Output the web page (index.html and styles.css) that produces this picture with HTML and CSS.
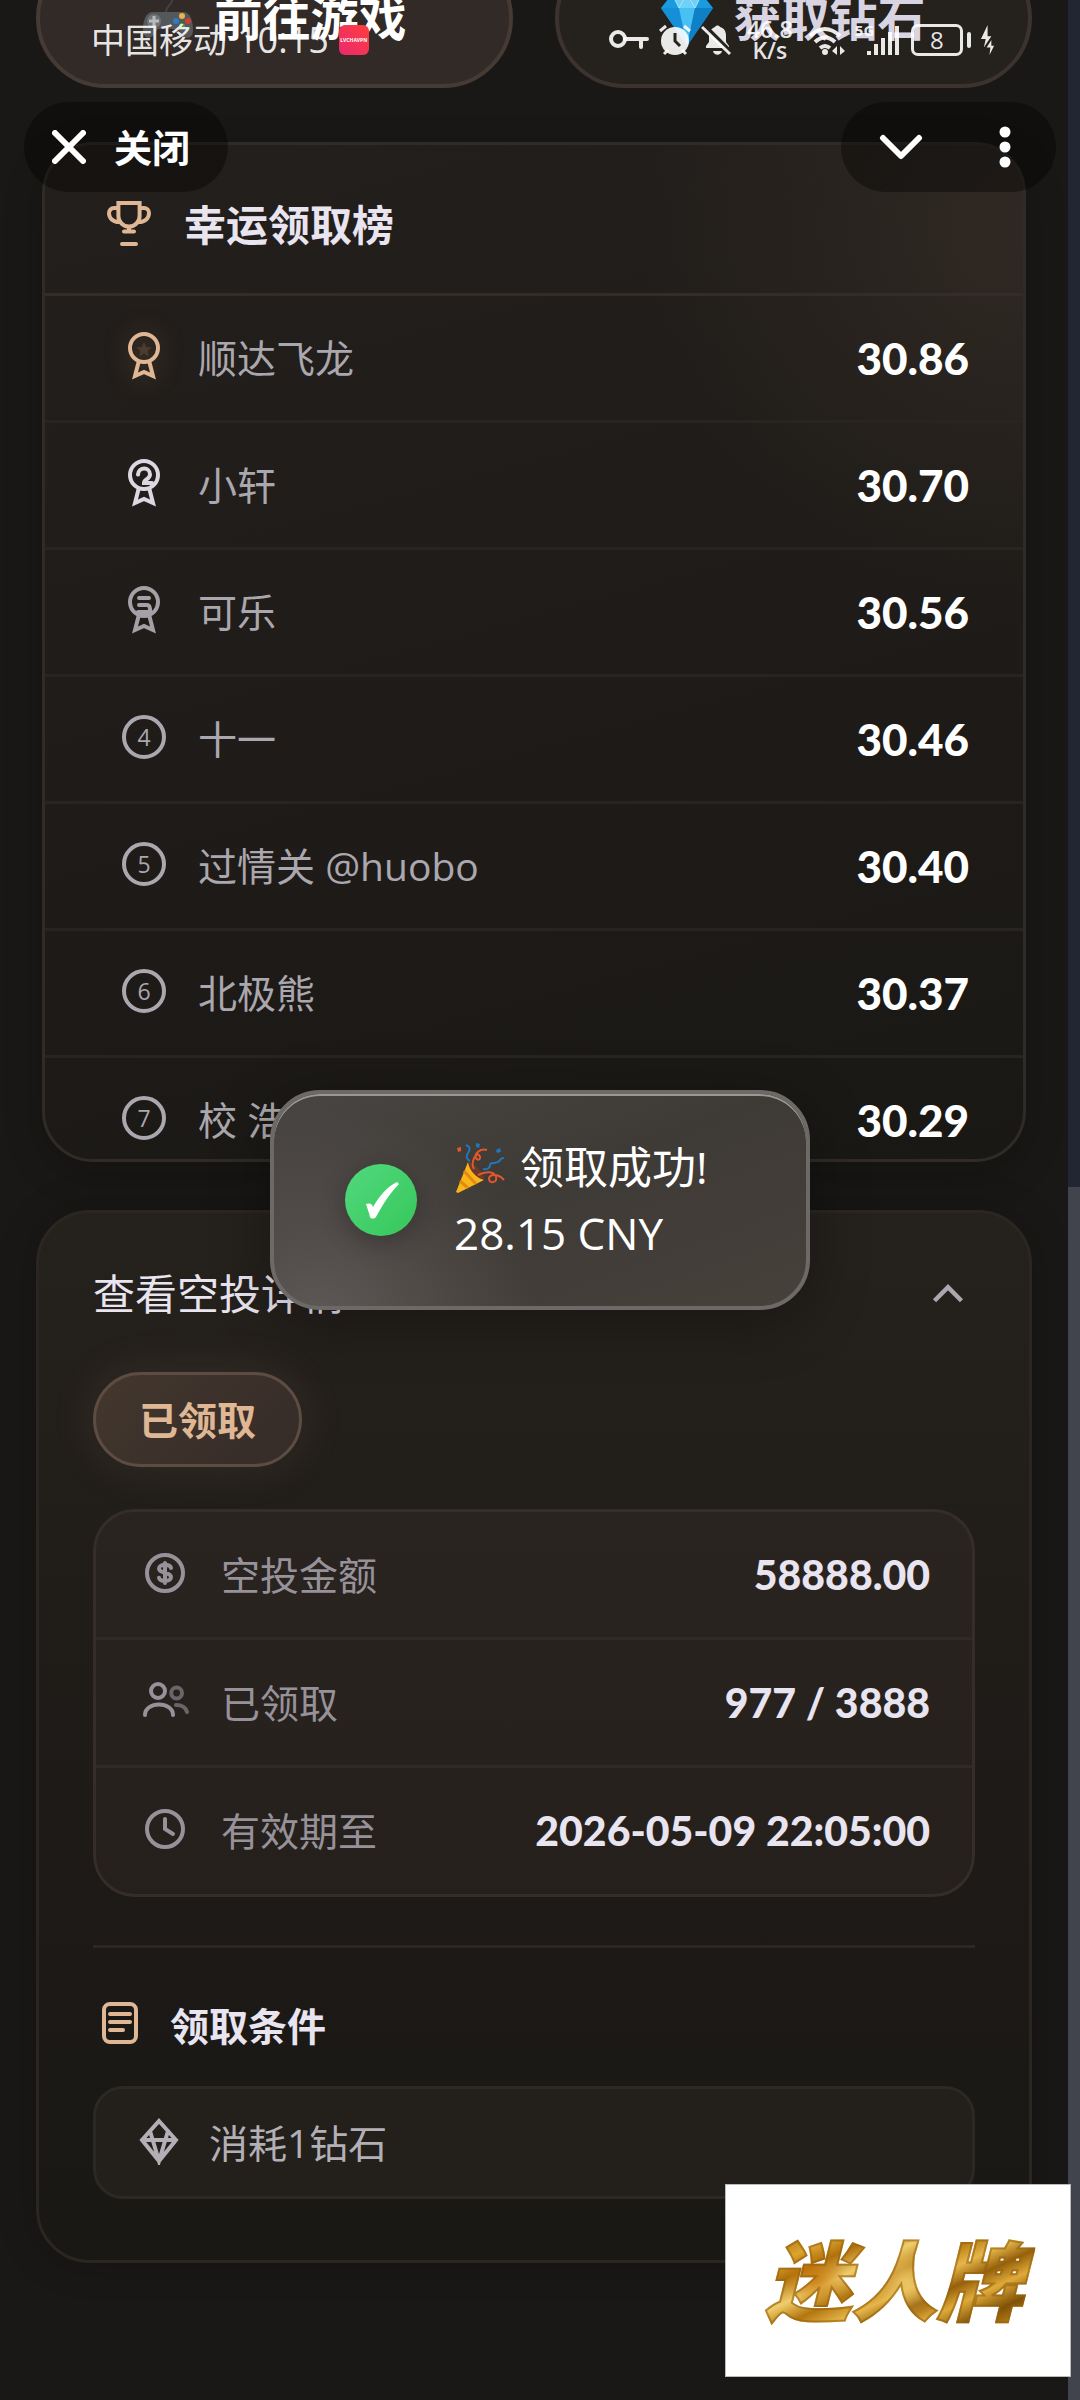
FILE: index.html
```html
<!DOCTYPE html>
<html lang="zh-CN">
<head>
  <meta charset="UTF-8">
  <meta name="viewport" content="width=device-width, initial-scale=1.0">
  <title>幸运领取榜</title>
  <link rel="stylesheet" href="styles.css">
</head>
<body>

<main class="page">
  <div class="actions">
    <button type="button" class="action action-game">
      <svg class="action-icon" viewBox="0 0 52 56" aria-hidden="true">
        <path d="M24 24c-1-8 4-7 6-13 1-4 0-7-1-9" fill="none" stroke="#3f4346" stroke-width="2"/>
        <path d="M11 22h30c7 0 10 8 10 18 0 9-8 10-11 4l-4-5H16l-4 5c-3 6-11 5-11-4 0-10 3-18 10-18z" fill="#54585b"/>
        <circle cx="12" cy="31" r="7" fill="#707477"/>
        <path d="M12 26v10M7 31h10" stroke="#b9bcbe" stroke-width="3"/>
        <circle cx="40" cy="26" r="3" fill="#e9b44a"/>
        <circle cx="46" cy="31" r="3" fill="#d23f31"/>
        <circle cx="34" cy="31" r="3" fill="#2e7cc4"/>
        <circle cx="40" cy="36" r="3" fill="#4a9b46"/>
      </svg>
      前往游戏
    </button>
    <button type="button" class="action action-gem">
      <svg class="action-icon" viewBox="0 0 52 56" aria-hidden="true">
        <path d="M11 4h30l11 14-26 38L0 18z" fill="#1a9be0"/>
        <path d="M11 4h30l-7 14H18z" fill="#6fd0f8"/>
        <path d="M0 18h18l8 38z" fill="#1590d8"/>
        <path d="M18 18h16l-8 38z" fill="#49c0f3"/>
        <path d="M34 18h18L26 56z" fill="#0f7fc6"/>
        <path d="M11 4l7 14L26 4l8 14 7-14" fill="none" stroke="#a8e3fb" stroke-width="1"/>
      </svg>
      获取钻石
    </button>
  </div>

  <section class="rank-card">
    <h2 class="rank-title">
      <svg class="icon" viewBox="0 0 24 24" aria-hidden="true"><path d="M6.700 2h10.600v6.500a5.300 5.300 0 0 1-10.600 0zM6.700 4.500H4.500A2.500 2.500 0 0 0 2 7c0 2.600 2 4.500 5 4.500M17.300 4.500h2.200A2.500 2.500 0 0 1 22 7c0 2.600-2 4.500-5 4.500M12 14v2M9.500 16.300h5M8.500 22.500h7"/></svg>
      幸运领取榜
    </h2>
    <ol class="rank-list">
      <li class="rank-row">
        <svg class="icon icon-gold" viewBox="0 0 24 24" aria-hidden="true"><circle cx="12" cy="8" r="7"/><path d="M9.300 15L7.500 22l4.500-2 4.500 2-1.800-7"/><path class="star" d="M12 5l1.100 2.500 2.700.2-2 1.800.6 2.700-2.400-1.500-2.400 1.500.6-2.700-2-1.800 2.700-.2z"/></svg>
        <span class="rank-name">顺达飞龙</span><strong class="rank-value">30.86</strong>
      </li>
      <li class="rank-row">
        <svg class="icon icon-silver" viewBox="0 0 24 24" aria-hidden="true"><circle cx="12" cy="8" r="7"/><path d="M9.300 15L7.500 22l4.500-2 4.500 2-1.800-7M9 7.800c.3-4 6-4 6 0 0 2.400-3 2.200-3 4.200h4"/></svg>
        <span class="rank-name">小轩</span><strong class="rank-value">30.70</strong>
      </li>
      <li class="rank-row">
        <svg class="icon icon-bronze" viewBox="0 0 24 24" aria-hidden="true"><circle cx="12" cy="8" r="7"/><path d="M9.300 15L7.500 22l4.500-2 4.500 2-1.800-7M9.500 6h5M9.500 9.500h4q1.800 0 1.500 3.500M9 13h6"/></svg>
        <span class="rank-name">可乐</span><strong class="rank-value">30.56</strong>
      </li>
      <li class="rank-row">
        <span class="rank-no">4</span>
        <span class="rank-name">十一</span><strong class="rank-value">30.46</strong>
      </li>
      <li class="rank-row">
        <span class="rank-no">5</span>
        <span class="rank-name">过情关 @huobo</span><strong class="rank-value">30.40</strong>
      </li>
      <li class="rank-row">
        <span class="rank-no">6</span>
        <span class="rank-name">北极熊</span><strong class="rank-value">30.37</strong>
      </li>
      <li class="rank-row">
        <span class="rank-no">7</span>
        <span class="rank-name">校 浩</span><strong class="rank-value">30.29</strong>
      </li>
    </ol>
  </section>

  <section class="detail-card">
    <button type="button" class="detail-toggle" aria-expanded="true">
      查看空投详情
      <svg class="chevron" viewBox="0 0 24 24" aria-hidden="true"><path d="M6 15l6-6 6 6"/></svg>
    </button>

    <span class="badge">已领取</span>

    <dl class="info">
      <div class="info-row">
        <dt><svg class="icon" viewBox="0 0 24 24" aria-hidden="true"><circle cx="12" cy="12" r="9"/><path d="M12 7v10M15 9.500c0-2-6-2.300-6 .3 0 2.700 6 1.500 6 4.300 0 2.500-6 2.300-6 .3"/></svg>空投金额</dt>
        <dd>58888.00</dd>
      </div>
      <div class="info-row">
        <dt><svg class="icon" viewBox="0 0 24 24" aria-hidden="true"><circle cx="8.500" cy="7" r="3.500"/><path d="M2 19c0-7 14-7 14 0"/><g opacity=".6"><circle cx="17.800" cy="8" r="2.700"/><path d="M17.500 14c3 0 5 1.500 5.500 3.500"/></g></svg>已领取</dt>
        <dd>977 / 3888</dd>
      </div>
      <div class="info-row">
        <dt><svg class="icon" viewBox="0 0 24 24" aria-hidden="true"><circle cx="12" cy="12" r="9"/><path d="M12 7v5l4 2.500"/></svg>有效期至</dt>
        <dd>2026-05-09 22:05:00</dd>
      </div>
    </dl>

    <hr class="divider">

    <h3 class="cond-title">
      <svg class="icon" viewBox="0 0 24 24" aria-hidden="true"><rect x="4" y="2" width="16" height="19" rx="3"/><path d="M7 7h10M7 11h10M7 15h6.500"/></svg>
      领取条件
    </h3>
    <p class="cond-item">
      <svg class="icon" viewBox="0 0 24 24" aria-hidden="true"><path d="M12 2l8.500 9.500L12 22 3.500 11.500zM3.500 11.500h17M7.500 7l4.500 15 4.500-15"/></svg>
      消耗1钻石
    </p>
  </section>
</main>

<div class="scrollbar"><div class="scroll-thumb"></div></div>

<!-- phone status bar -->
<div class="status">
  <div class="status-left">
    <span>中国移动</span>
    <span class="st-time">10:15</span>
    <span class="vpn">LVCHAVPN</span>
  </div>
  <div class="status-right">
    <svg class="st-key" viewBox="0 0 40 32"><circle cx="9" cy="15" r="7" fill="none" stroke="currentColor" stroke-width="4"/><path d="M16 15h22M32 15v8" fill="none" stroke="currentColor" stroke-width="4" stroke-linecap="round"/></svg>
    <svg class="st-alarm" viewBox="0 0 32 32"><circle cx="16" cy="17" r="14" fill="currentColor"/><path d="M1 7l6-5M31 7l-6-5M5 30l4-4M27 30l-4-4" stroke="currentColor" stroke-width="3"/><path d="M16 9v8l5 5" fill="none" stroke="#26221e" stroke-width="3"/></svg>
    <svg class="st-bell" viewBox="0 0 32 32"><path d="M5 24v-2l3-4v-6c0-5 3-8 6-9 1-2 4-2 5 0 4 1 6 4 6 9v6l3 4v2zM12 27h9c-1 5-8 5-9 0z" fill="currentColor"/><path d="M3 1l28 28" stroke="#26221e" stroke-width="4"/><path d="M1 3l28 27" stroke="currentColor" stroke-width="3"/></svg>
    <span class="st-speed">46.8<br>K/s</span>
    <svg class="st-wifi" viewBox="0 0 38 32"><path d="M3 12q15-14 30 0M8 18q10-9 20 0M13 24q5-4 10 0" fill="none" stroke="currentColor" stroke-width="4"/><circle cx="18" cy="28" r="3" fill="currentColor"/><path d="M30 22v9l-5-4zM33 31v-9l5 5z" fill="currentColor"/></svg>
    <span class="st-cell">
      <span class="st-5g">5G</span>
      <svg viewBox="0 0 34 32"><path d="M2 31v-4M9 31V20M16 31V14M23 31V8M30 31V2" stroke="currentColor" stroke-width="4"/></svg>
    </span>
    <span class="st-battery">8</span>
    <svg class="st-bolt" viewBox="0 0 14 34"><path d="M7 1L0 16h5l-2 9 8-12H7zM11 17l-5 8h4l-1 8 5-10h-3z" fill="currentColor"/></svg>
  </div>
</div>

<!-- web view controls -->
<div class="controls">
  <button type="button" class="control control-close">
    <svg viewBox="0 0 34 34" aria-hidden="true"><path d="M3 3l28 28M31 3L3 31"/></svg>
    关闭
  </button>
  <div class="control control-menu">
    <button type="button" aria-label="收起"><svg viewBox="0 0 44 44" aria-hidden="true"><path d="M4 13l18 18 18-18"/></svg></button>
    <button type="button" aria-label="更多"><svg viewBox="0 0 44 44" aria-hidden="true"><path class="dots" d="M22 7v0M22 22v0M22 37v0"/></svg></button>
  </div>
</div>

<div class="toast" role="status">
  <span class="toast-check"><svg viewBox="0 0 72 72" aria-hidden="true"><path d="M21 40c3-1 6-1 7 3 7-12 14-20 24-25l2 2C45 29 38 40 31 53c-2 2-5 2-6 0-1-5-3-9-4-13z" fill="#fff"/></svg></span>
  <div class="toast-text">
    <div class="toast-line">
      <svg class="party" viewBox="0 0 52 52" aria-hidden="true">
        <path d="M2 51l12-30c4 7 9 13 16 18L4 52z" fill="#f9b51d"/>
        <path d="M10 30l12 13M6 40l8 7" stroke="#e38b0c" stroke-width="3"/>
        <path d="M14 21c4-1 18 12 16 18-8-2-15-10-16-18z" fill="#6b3a2a"/>
        <path d="M12 4c5 2 4 5 2 8s-2 6 2 8M29 28c4 1 7-1 7-4s5-1 8-3 2-4 6-4" fill="none" stroke="#2276bb" stroke-width="2"/>
        <path d="M33 9c-7-2-13 4-11 8s6 0 3-3-9 8-5 14M24 34c8-4 16-4 18 2s-7 7-7 2 9-6 15 1" fill="none" stroke="#e2572b" stroke-width="2"/>
        <path d="M22 2l4 1-1 4-3-1zM42 9l4-2 1 4-4 1z" fill="#2276bb"/><path d="M3 7l4-1v4l-3 1z" fill="#e2572b"/>
      </svg>
      领取成功!
    </div>
    <div class="toast-line">28.15 CNY</div>
  </div>
</div>

<div class="watermark"><span>迷人牌</span></div>

</body>
</html>
```
FILE: styles.css
```css
* {
  box-sizing: border-box;
}

body {
  margin: 0;
  min-height: 100vh;
  display: flex;
  position: relative;
  overflow: hidden;
  background-color: #191816;
  color: #e8e4f0;
  font-family: "Open Sans", "Noto Sans CJK SC", sans-serif;
  font-size: 39px;
  line-height: 52px;
}

button {
  border: none;
  padding: 0;
  background: none;
  color: inherit;
  font: inherit;
  cursor: pointer;
}

h2,
h3,
p,
ol,
dl,
dd {
  margin: 0;
  padding: 0;
}

.page {
  flex: 1;
  padding: 0 36px 60px;
}

.icon {
  flex: none;
  width: 48px;
  height: 48px;
  margin-bottom: 4px;
  fill: none;
  stroke: currentColor;
  stroke-width: 2;
  stroke-linecap: round;
}

/* Top buttons, scrolled half out of view */
.actions {
  display: grid;
  grid-template-columns: 1fr 1fr;
  gap: 42px;
  margin-top: -52px;
}

.action {
  display: flex;
  justify-content: center;
  align-items: center;
  gap: 20px;
  height: 140px;
  border: 4px solid #463b34;
  border-radius: 70px;
  background-color: #322a26;
  color: #fff;
  font-size: 48px;
  font-weight: 700;
}

.action-gem {
  background-color: #25211d;
  border-color: #3d332e;
  color: #d9d4e2;
}

.action-icon {
  width: 52px;
  height: 56px;
}

/* Ranking */
.rank-card {
  margin: 54px 6px 0;
  overflow: hidden;
  border: 3px solid #302b27;
  border-radius: 51px;
  background: radial-gradient(circle at 100% 8%, #302923 0, rgba(48, 41, 35, 0) 380px), linear-gradient(165deg, #231f1c, #1a1815);
  box-shadow: 0 12px 40px rgba(0, 0, 0, 0.2);
}

.rank-title {
  display: flex;
  align-items: center;
  gap: 31px;
  padding: 54px 60px 42px;
  border-bottom: 3px solid #332d29;
  font-size: 42px;
  font-weight: 700;
}

.rank-title .icon,
.cond-title .icon {
  color: #dfb795;
}

.rank-list {
  max-height: 863px;
  overflow: hidden;
  list-style: none;
}

.rank-row {
  display: flex;
  align-items: center;
  gap: 30px;
  height: 127px;
  padding: 0 54px 0 75px;
  border-bottom: 3px solid #282421;
  color: #aba7ae;
}

.icon-gold {
  color: #dfb795;
  filter: drop-shadow(0 0 12px rgba(223, 150, 90, 0.25));
}

.icon-silver {
  color: #dcd8e2;
}

.icon-bronze {
  color: #a3a0a6;
}

.star {
  fill: #4b3c32;
  stroke: none;
}

.rank-no {
  flex: none;
  width: 44px;
  height: 44px;
  margin: 0 2px 4px;
  border: 4px solid #aba7ae;
  border-radius: 50%;
  font-size: 23px;
  line-height: 36px;
  text-align: center;
}

.rank-name {
  flex: 1;
}

.rank-value {
  color: #fff;
  font-family: Lato, sans-serif;
  font-size: 44px;
  font-weight: 900;
}

/* Airdrop details */
.detail-card {
  margin-top: 48px;
  padding: 54px 54px 61px;
  border: 3px solid #2b2622;
  border-radius: 54px;
  background: linear-gradient(#25211d, #1c1916 70%, #191815);
  box-shadow: 0 0 40px rgba(0, 0, 0, 0.2);
}

.detail-toggle {
  display: flex;
  justify-content: space-between;
  align-items: center;
  width: 100%;
  font-size: 42px;
}

.chevron {
  width: 54px;
  height: 54px;
  fill: none;
  stroke: #aba7ae;
  stroke-width: 2;
}

.badge {
  display: block;
  width: fit-content;
  margin-top: 51px;
  padding: 0 43px;
  border: 3px solid #5c4c41;
  border-radius: 48px;
  background: linear-gradient(135deg, #43372d, #352b28);
  box-shadow: 0 0 48px rgba(223, 183, 149, 0.1);
  color: #dfb795;
  font-weight: 700;
  line-height: 89px;
}

.info {
  margin-top: 42px;
  border: 3px solid #342d29;
  border-radius: 42px;
  background: linear-gradient(#2a2421, #25201c);
}

.info-row {
  display: flex;
  justify-content: space-between;
  align-items: center;
  height: 128px;
  padding: 0 42px 0 45px;
  border-bottom: 3px solid #302a25;
}

.info-row:last-child {
  height: 126px;
  border-bottom: none;
}

.info dt {
  display: flex;
  align-items: center;
  gap: 32px;
  color: #97929a;
}

.info dd {
  font-family: Lato, sans-serif;
  font-size: 41px;
  font-weight: 900;
}

.divider {
  height: 3px;
  margin: 48px 0 52px;
  border: none;
  background-color: #2c2724;
}

.cond-title {
  display: flex;
  align-items: center;
  gap: 26px;
  padding-left: 3px;
  font-size: 39px;
  font-weight: 700;
}

.cond-item {
  display: flex;
  align-items: center;
  gap: 26px;
  height: 113px;
  margin-top: 34px;
  padding: 0 39px;
  border: 3px solid #2b2825;
  border-radius: 30px;
  background-color: #231f1b;
  color: #b3afb6;
}

/* Scrollbar strip */
.scrollbar {
  display: flex;
  align-items: flex-end;
  width: 12px;
  background-color: #222532;
}

.scroll-thumb {
  width: 100%;
  height: 1213px;
  background-color: #41444c;
}

/* Status bar */
.status {
  position: absolute;
  top: 0;
  left: 0;
  right: 0;
  display: flex;
  justify-content: space-between;
  align-items: center;
  height: 80px;
  padding: 0 86px 0 91px;
  color: rgba(255, 255, 255, 0.9);
  font-size: 34px;
  pointer-events: none;
}

.status-left,
.status-right {
  display: flex;
  align-items: center;
}

.status-left {
  gap: 10px;
}

.st-time {
  font-size: 36px;
}

.vpn {
  width: 30px;
  height: 30px;
  overflow: hidden;
  border-radius: 6px;
  background: linear-gradient(45deg, #e92a70, #ff3d3d);
  color: #fff;
  font-size: 5px;
  font-weight: 700;
  line-height: 30px;
  text-align: center;
}

.status-right {
  gap: 10px;
}

.status-right svg {
  height: 32px;
}

.st-speed {
  width: 54px;
  font-size: 23px;
  font-weight: 600;
  line-height: 21px;
  text-align: center;
}

.st-cell {
  position: relative;
  display: flex;
  padding-left: 12px;
}

.st-5g {
  position: absolute;
  top: -2px;
  left: 0;
  font-size: 15px;
  font-weight: 700;
  line-height: 16px;
}

.st-battery {
  position: relative;
  width: 52px;
  height: 32px;
  margin-right: 8px;
  border: 3px solid;
  border-radius: 7px;
  font-size: 24px;
  line-height: 26px;
  text-align: center;
}

.st-battery::after {
  content: "";
  position: absolute;
  top: 5px;
  right: -11px;
  width: 4px;
  height: 16px;
  border-radius: 2px;
  background-color: currentColor;
}

/* Floating controls */
.controls {
  position: absolute;
  top: 102px;
  left: 24px;
  right: 24px;
  display: flex;
  justify-content: space-between;
}

.control {
  display: flex;
  align-items: center;
  height: 90px;
  border-radius: 45px;
  background-color: rgba(0, 0, 0, 0.36);
  color: #fff;
}

.control svg {
  display: block;
  fill: none;
  stroke: currentColor;
  stroke-width: 6;
  stroke-linecap: round;
  stroke-linejoin: round;
}

.control-close {
  gap: 28px;
  padding: 0 38px 0 28px;
  font-size: 38px;
  font-weight: 700;
}

.control-close svg {
  width: 34px;
  height: 34px;
}

.control-menu {
  gap: 60px;
  padding: 0 29px 0 38px;
}

.control-menu svg {
  width: 44px;
  height: 44px;
}

.control-menu .dots {
  stroke-width: 11;
}

/* Success toast */
.toast {
  position: absolute;
  top: 1200px;
  left: 50%;
  transform: translate(-50%, -50%);
  display: flex;
  align-items: center;
  gap: 37px;
  width: 50%;
  height: 220px;
  padding: 0 71px;
  border: 4px solid #6d6966;
  border-radius: 50px;
  background: radial-gradient(circle at 8% 110%, #5f5957 0, rgba(95, 89, 87, 0) 220px), linear-gradient(160deg, #494542, #3e3a36 45%, #47413b);
  box-shadow: inset 0 2px 0 #9a9794, 0 12px 60px rgba(0, 0, 0, 0.3);
  color: #fff;
  font-size: 44px;
  line-height: 66px;
}

.toast-check {
  flex: none;
  width: 72px;
  height: 72px;
  border-radius: 50%;
  background: linear-gradient(135deg, #52d97f, #36c759);
  box-shadow: 0 6px 24px rgba(0, 0, 0, 0.25);
}

.toast-check svg {
  display: block;
}

.toast-line {
  display: flex;
  align-items: center;
  gap: 14px;
  white-space: nowrap;
}

.party {
  width: 52px;
  height: 52px;
}

.watermark {
  position: absolute;
  right: 9px;
  bottom: 23px;
  display: flex;
  justify-content: center;
  align-items: center;
  width: 346px;
  height: 193px;
  padding-right: 8px;
  border: 1px solid #bbb;
  background-color: #fff;
  font-size: 86px;
  font-weight: 900;
  font-style: italic;
  line-height: 110px;
}

.watermark span {
  padding: 0 12px;
  background:
    radial-gradient(circle at 54% 50%, rgba(240, 205, 110, 0.8), rgba(240, 205, 110, 0) 34px),
    radial-gradient(circle at 22% 48%, rgba(200, 120, 10, 0.8), rgba(200, 120, 10, 0) 30px),
    linear-gradient(155deg, #a46a08 8%, #dba52f 20%, #b0700c 28%, #f0cd6c 38%, #b3760f 47%, #e6b64a 56%, #96600a 64%, #dfaa3a 72%, #7f5206 82%, #c98a18 92%);
  -webkit-background-clip: text;
  background-clip: text;
  color: transparent;
  -webkit-text-stroke: 2px rgba(150, 98, 14, 0.6);
}
```
